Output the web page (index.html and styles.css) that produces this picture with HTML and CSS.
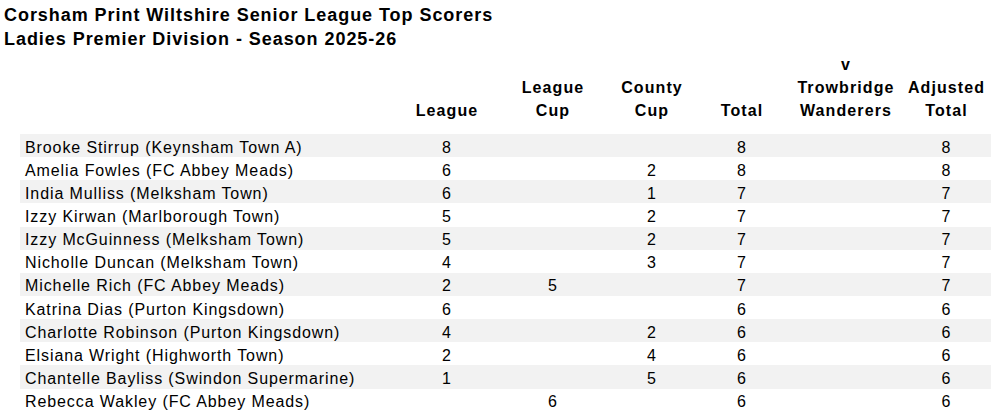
FILE: index.html
```html
<!DOCTYPE html>
<html lang="en">
<head>
<meta charset="utf-8">
<title>Top Scorers</title>
<link rel="stylesheet" href="styles.css">
</head>
<body>
<h1 class="title">Corsham Print Wiltshire Senior League Top Scorers<br>Ladies Premier Division - Season 2025-26</h1>
<table class="scorers">
<colgroup>
<col class="c-name"><col class="c-lg"><col class="c-lc"><col class="c-cc"><col class="c-tot"><col class="c-vt"><col class="c-adj">
</colgroup>
<thead>
<tr><th></th><th>League</th><th>League<br>Cup</th><th>County<br>Cup</th><th>Total</th><th>v<br>Trowbridge<br>Wanderers</th><th>Adjusted<br>Total</th></tr>
</thead>
<tbody>
<tr class="alt"><td class="name">Brooke Stirrup (Keynsham Town A)</td><td>8</td><td></td><td></td><td>8</td><td></td><td>8</td></tr>
<tr><td class="name">Amelia Fowles (FC Abbey Meads)</td><td>6</td><td></td><td>2</td><td>8</td><td></td><td>8</td></tr>
<tr class="alt"><td class="name">India Mulliss (Melksham Town)</td><td>6</td><td></td><td>1</td><td>7</td><td></td><td>7</td></tr>
<tr><td class="name">Izzy Kirwan (Marlborough Town)</td><td>5</td><td></td><td>2</td><td>7</td><td></td><td>7</td></tr>
<tr class="alt"><td class="name">Izzy McGuinness (Melksham Town)</td><td>5</td><td></td><td>2</td><td>7</td><td></td><td>7</td></tr>
<tr><td class="name">Nicholle Duncan (Melksham Town)</td><td>4</td><td></td><td>3</td><td>7</td><td></td><td>7</td></tr>
<tr class="alt"><td class="name">Michelle Rich (FC Abbey Meads)</td><td>2</td><td>5</td><td></td><td>7</td><td></td><td>7</td></tr>
<tr><td class="name">Katrina Dias (Purton Kingsdown)</td><td>6</td><td></td><td></td><td>6</td><td></td><td>6</td></tr>
<tr class="alt"><td class="name">Charlotte Robinson (Purton Kingsdown)</td><td>4</td><td></td><td>2</td><td>6</td><td></td><td>6</td></tr>
<tr><td class="name">Elsiana Wright (Highworth Town)</td><td>2</td><td></td><td>4</td><td>6</td><td></td><td>6</td></tr>
<tr class="alt"><td class="name">Chantelle Bayliss (Swindon Supermarine)</td><td>1</td><td></td><td>5</td><td>6</td><td></td><td>6</td></tr>
<tr><td class="name">Rebecca Wakley (FC Abbey Meads)</td><td></td><td>6</td><td></td><td>6</td><td></td><td>6</td></tr>
</tbody>
</table>
</body>
</html>
```

FILE: styles.css
```css
html, body {
  margin: 0;
  padding: 0;
  background: #fff;
  overflow: hidden;
}
body {
  font-family: "Liberation Sans", Arial, sans-serif;
  color: #000;
}
.title {
  margin: 0;
  padding: 3px 0 0 4px;
  font-size: 18px;
  line-height: 24px;
  font-weight: bold;
  letter-spacing: 0.95px;
}
.scorers {
  margin: 2px 0 0 20px;
  width: 971px;
  table-layout: fixed;
  border-collapse: collapse;
  border-spacing: 0;
  font-size: 16px;
}
.c-name { width: 378px; }
.c-lg { width: 98px; }
.c-lc { width: 114px; }
.c-cc { width: 84px; }
.c-tot { width: 96px; }
.c-vt { width: 112px; }
.c-adj { width: 89px; }
.scorers th {
  font-weight: bold;
  line-height: 23px;
  padding: 0 0 12px;
  text-align: center;
  vertical-align: bottom;
  letter-spacing: 1.1px;
}
.scorers td {
  padding: 3.6px 0 0.55px;
  line-height: 19px;
  text-align: center;
  white-space: nowrap;
  letter-spacing: 0.9px;
}
.scorers td.name {
  text-align: left;
  padding-left: 5px;
}
.scorers tr.alt td {
  background: #f2f2f2;
}
```
